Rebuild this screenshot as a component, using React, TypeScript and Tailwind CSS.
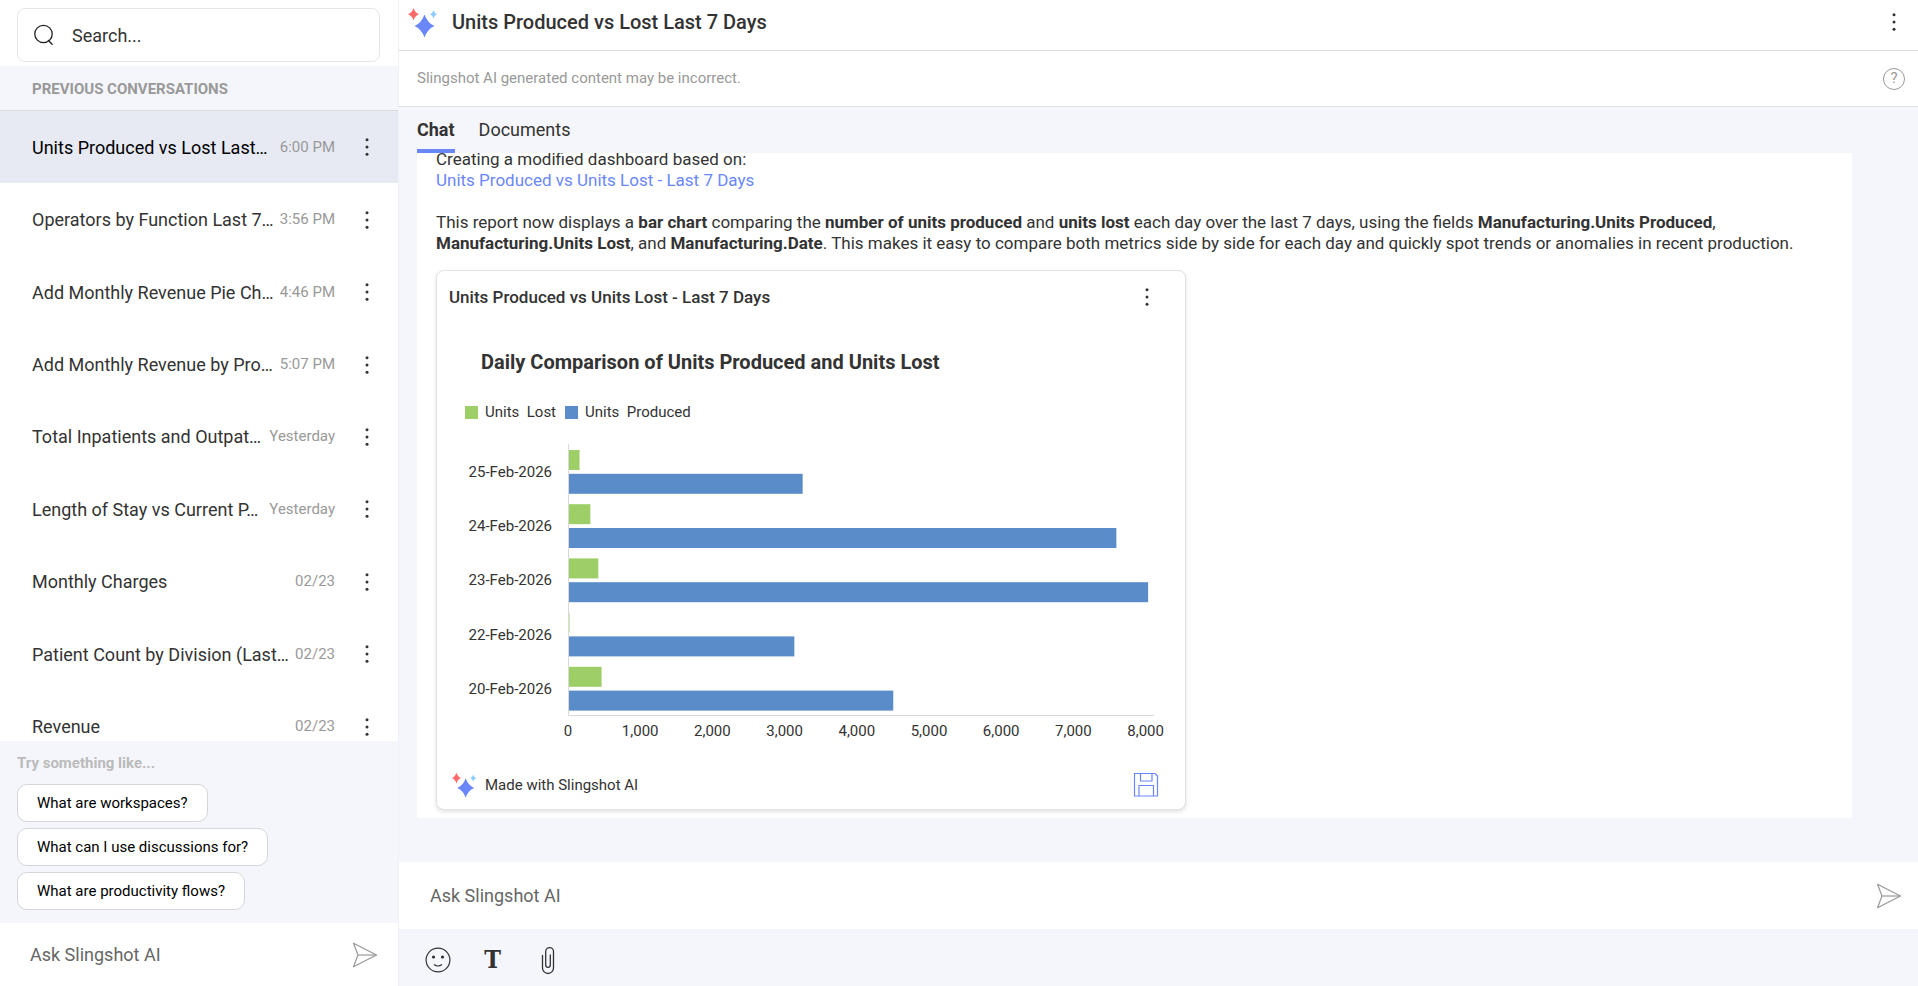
import { useState } from "react";

interface Conversation {
  id: number;
  title: string;
  time: string;
}

interface DayUnits {
  date: string;
  lost: number;
  produced: number;
}

const conversations: Conversation[] = [
  { id: 1, title: "Units Produced vs Lost Last…", time: "6:00 PM" },
  { id: 2, title: "Operators by Function Last 7…", time: "3:56 PM" },
  { id: 3, title: "Add Monthly Revenue Pie Ch…", time: "4:46 PM" },
  { id: 4, title: "Add Monthly Revenue by Pro…", time: "5:07 PM" },
  { id: 5, title: "Total Inpatients and Outpat…", time: "Yesterday" },
  { id: 6, title: "Length of Stay vs Current P…", time: "Yesterday" },
  { id: 7, title: "Monthly Charges", time: "02/23" },
  { id: 8, title: "Patient Count by Division (Last…", time: "02/23" },
  { id: 9, title: "Revenue", time: "02/23" },
];

const suggestions = [
  "What are workspaces?",
  "What can I use discussions for?",
  "What are productivity flows?",
];

const days: DayUnits[] = [
  { date: "25-Feb-2026", lost: 160, produced: 3250 },
  { date: "24-Feb-2026", lost: 310, produced: 7595 },
  { date: "23-Feb-2026", lost: 420, produced: 8035 },
  { date: "22-Feb-2026", lost: 20, produced: 3135 },
  { date: "20-Feb-2026", lost: 465, produced: 4505 },
];

const ticks = [0, 1000, 2000, 3000, 4000, 5000, 6000, 7000, 8000];

function Sparkles({ className }: { className?: string }) {
  return (
    <svg viewBox="0 0 29 31" className={className} aria-hidden="true">
      <path d="M16.5 7.500Q19.500 16 26.500 19Q19.500 22 16.500 30.500Q13.500 22 6.500 19Q13.500 16 16.500 7.500z" fill="#6a87f9" />
      <path d="M5.500 1Q7 5.800 11 7.300Q7 8.800 5.500 13.600Q4 8.800 0 7.300Q4 5.800 5.500 1z" fill="#ff6a6a" />
      <path d="M25.500 3.300Q26.500 6.300 29 7.300Q26.500 8.300 25.500 11.300Q24.500 8.300 22 7.300Q24.500 6.300 25.500 3.300z" fill="#8ccbff" />
    </svg>
  );
}

function MoreButton({ label }: { label: string }) {
  return (
    <button aria-label={label} className="flex h-8 w-6 shrink-0 items-center justify-center">
      <svg viewBox="0 0 4 18" className="h-[18px] w-1" fill="#333">
        <circle cx="2" cy="1.700" r="1.500" />
        <circle cx="2" cy="9" r="1.500" />
        <circle cx="2" cy="16.300" r="1.500" />
      </svg>
    </button>
  );
}

function SendButton() {
  return (
    <button aria-label="Send" className="shrink-0">
      <svg viewBox="0 0 26 26" className="h-[26px] w-[26px]" fill="none" stroke="#999" strokeWidth="1.2" strokeLinejoin="round">
        <path d="M1.500 1.200L24.500 13L1.500 24.800L6 13z" />
        <path d="M6 13h18.500" />
      </svg>
    </button>
  );
}

function UnitsChart() {
  const left = 131;
  const bottom = 279;
  const band = 54.2;
  const unit = 0.0722;

  return (
    <svg viewBox="0 0 748 320" className="block w-full" role="img" aria-label="Units lost and produced per day">
      {days.map((day, i) => {
        const top = 8 + i * band;
        return (
          <g key={day.date}>
            <text x="115" y={top + 33} textAnchor="end" fontSize="15" fill="#333">
              {day.date}
            </text>
            <rect x={left} y={top + 6} width={day.lost * unit} height="20" fill="#9dce67" />
            <rect x={left} y={top + 29.800} width={day.produced * unit} height="20" fill="#5a8cca" />
          </g>
        );
      })}
      <path d={`M${left + 0.5} 8V${bottom + 0.5}H717`} fill="none" stroke="#d9d9d9" />
      {ticks.map((tick) => (
        <text key={tick} x={left + tick * unit} y="300" textAnchor="middle" fontSize="15" fill="#333">
          {tick.toLocaleString("en-US")}
        </text>
      ))}
    </svg>
  );
}

function DashboardCard() {
  return (
    <section className="mt-4 w-[750px] max-w-full rounded-lg border border-[#e3e3e3] bg-white shadow-[0_2px_4px_rgba(0,0,0,0.12)]">
      <div className="flex items-center justify-between pt-2.5 pr-[26px] pl-3">
        <h2 className="font-medium">Units Produced vs Units Lost - Last 7 Days</h2>
        <MoreButton label="Dashboard options" />
      </div>
      <h3 className="mt-[37px] pl-11 text-[20px] leading-6 font-bold">
        Daily Comparison of Units Produced and Units Lost
      </h3>
      <div className="mt-7 flex items-center gap-[9px] pl-7 text-[15px] leading-5 whitespace-pre">
        <span className="flex items-center gap-[7px]">
          <span className="h-[13px] w-[13px] bg-[#9dce67]" />
          {"Units  Lost"}
        </span>
        <span className="flex items-center gap-[7px]">
          <span className="h-[13px] w-[13px] bg-[#5a8cca]" />
          {"Units  Produced"}
        </span>
      </div>
      <div className="mt-3.5">
        <UnitsChart />
      </div>
      <div className="flex items-center justify-between pt-4 pr-[26px] pb-[11px] pl-3.5">
        <span className="flex items-center gap-2 text-[15px]">
          <Sparkles className="h-[26px] w-[26px]" />
          Made with Slingshot AI
        </span>
        <button aria-label="Save dashboard">
          <svg viewBox="0 0 26 26" className="h-[26px] w-[26px]" fill="none" stroke="#6a87f9" strokeWidth="1.200">
            <path d="M1.500 1.500h20.500l2.500 2.500v20h-23z" />
            <path d="M7.500 1.500v7.500h11.500v-7.500" />
            <path d="M6 24v-10.500h14.500v10.500" />
          </svg>
        </button>
      </div>
    </section>
  );
}

export default function App() {
  const [selected, setSelected] = useState(1);
  const [tab, setTab] = useState("Chat");

  return (
    <div className="flex h-screen overflow-hidden bg-[#f5f6fb] font-['Roboto',sans-serif] text-[18px] leading-[21px] text-[#333]">
      {/* Sidebar */}
      <aside className="flex w-[399px] shrink-0 flex-col border-r border-[#f0f1f6]">
        <div className="bg-white pt-2 pr-[18px] pb-1 pl-[17px]">
          <label className="flex h-[54px] items-center gap-[18px] rounded-lg border border-[#e6e6e6] px-4">
            <svg viewBox="0 0 20 22" className="h-[22px] w-5 shrink-0" fill="none" stroke="#222" strokeWidth="1.300">
              <circle cx="9.500" cy="10" r="8.700" />
              <path d="M14 16l4.500 4.700" />
            </svg>
            <input
              aria-label="Search"
              placeholder="Search..."
              className="w-full outline-none placeholder:text-[#333]"
            />
          </label>
        </div>
        <h2 className="border-b border-[#d9dae0] px-8 pt-[13px] pb-[11px] text-[15px] leading-5 font-bold text-[#999]">
          PREVIOUS CONVERSATIONS
        </h2>
        <div className="min-h-0 flex-1 overflow-hidden bg-white">
          <ul className="grid h-[652px] auto-rows-fr grid-cols-1">
            {conversations.map((item) => (
              <li
                key={item.id}
                className={`flex items-center pr-[19px] pl-8 ${
                  item.id === selected ? "bg-[#e7eaf3] text-black" : ""
                }`}
              >
                <button
                  onClick={() => setSelected(item.id)}
                  className="flex h-full min-w-0 flex-1 items-center gap-1 text-left"
                >
                  <span className="flex-1 truncate">{item.title}</span>
                  <span className="text-[15px] text-[#999]">{item.time}</span>
                </button>
                <span className="ml-5 flex">
                  <MoreButton label={`Options for ${item.title}`} />
                </span>
              </li>
            ))}
          </ul>
        </div>
        <div className="px-[17px] pt-3 pb-[13px]">
          <p className="text-[15px] font-bold text-[#bbb]">Try something like...</p>
          <div className="mt-2.5 flex flex-col items-start gap-1.5">
            {suggestions.map((text) => (
              <button
                key={text}
                className="h-[38px] rounded-[10px] border border-[#d5d6dc] bg-white px-[19px] text-[15px] text-black"
              >
                {text}
              </button>
            ))}
          </div>
        </div>
        <form className="flex h-[63px] shrink-0 items-center bg-white pr-5 pl-[30px]">
          <input
            aria-label="Ask Slingshot AI"
            placeholder="Ask Slingshot AI"
            className="min-w-0 flex-1 outline-none placeholder:text-[#666]"
          />
          <SendButton />
        </form>
      </aside>

      {/* Conversation */}
      <main className="flex min-w-0 flex-1 flex-col">
        <header className="flex h-[51px] shrink-0 items-start justify-between border-b border-[#dcdce0] bg-white pt-1.5 pr-3 pl-[9px]">
          <div className="flex h-8 items-center gap-[15px]">
            <Sparkles className="h-[31px] w-[29px]" />
            <h1 className="text-[20px] font-medium">Units Produced vs Lost Last 7 Days</h1>
          </div>
          <MoreButton label="Conversation options" />
        </header>
        <div className="flex h-14 shrink-0 items-center justify-between border-b border-[#dfe0e5] bg-white pr-[13px] pl-[18px]">
          <p className="text-[15px] text-[#999]">Slingshot AI generated content may be incorrect.</p>
          <button
            aria-label="Help"
            className="flex h-[22px] w-[22px] items-center justify-center rounded-full border border-[#999] text-[15px] text-[#999]"
          >
            ?
          </button>
        </div>
        <nav className="flex h-[46px] shrink-0 items-end gap-6 pl-[18px]">
          {["Chat", "Documents"].map((name) => (
            <button
              key={name}
              onClick={() => setTab(name)}
              className={`h-9 border-b-4 pb-2 ${
                tab === name ? "border-[#6a87f9] font-bold" : "border-transparent"
              }`}
            >
              {name}
            </button>
          ))}
        </nav>
        <div className="mr-[66px] ml-[18px] flex min-h-0 flex-1 flex-col justify-end overflow-hidden bg-white px-[19px] pb-2 text-[17px] leading-[21px]">
          <p>
            Creating a modified dashboard based on:
            <br />
            <a href="#dashboard" className="text-[#6a87f9]">
              Units Produced vs Units Lost - Last 7 Days
            </a>
          </p>
          <p className="mt-[21px]">
            This report now displays a <b>bar chart</b> comparing the <b>number of units produced</b> and{" "}
            <b>units lost</b> each day over the last 7 days, using the fields{" "}
            <b>Manufacturing.Units Produced</b>, <b>Manufacturing.Units Lost</b>, and{" "}
            <b>Manufacturing.Date</b>. This makes it easy to compare both metrics side by side for each day and
            quickly spot trends or anomalies in recent production.
          </p>
          <DashboardCard />
        </div>

        {/* Composer */}
        <form className="mt-11 flex h-[67px] shrink-0 items-center bg-white pr-4 pl-[31px]">
          <input
            aria-label="Message"
            placeholder="Ask Slingshot AI"
            className="min-w-0 flex-1 outline-none placeholder:text-[#666]"
          />
          <SendButton />
        </form>
        <div className="flex h-[57px] shrink-0 items-center pt-1 pl-[11px]">
          <button aria-label="Emoji" className="flex w-[55px] justify-center">
            <svg viewBox="0 0 26 26" className="h-[26px] w-[26px]" fill="none" stroke="#333" strokeWidth="1.200">
              <circle cx="13" cy="13" r="11.900" />
              <circle cx="8.500" cy="10" r="1" fill="#333" />
              <circle cx="17.500" cy="10" r="1" fill="#333" />
              <path d="M9 17.500c2.400 1.800 5.600 1.800 8 0" />
            </svg>
          </button>
          <button
            aria-label="Text format"
            className="w-[55px] font-['DejaVu_Serif_Condensed','DejaVu_Serif',serif] text-[25px] font-bold"
          >
            T
          </button>
          <button aria-label="Attach file" className="flex w-[55px] justify-center">
            <svg viewBox="0 0 14 30" className="h-[30px] w-3.5" fill="none" stroke="#333" strokeWidth="1.300" strokeLinecap="round">
              <path d="M1.500 10.500v12.500a5.500 5.500 0 0 0 11 0V6.500a3.900 3.900 0 0 0-7.800 0v13.500a2.300 2.300 0 0 0 4.600 0V10" />
            </svg>
          </button>
        </div>
      </main>
    </div>
  );
}
